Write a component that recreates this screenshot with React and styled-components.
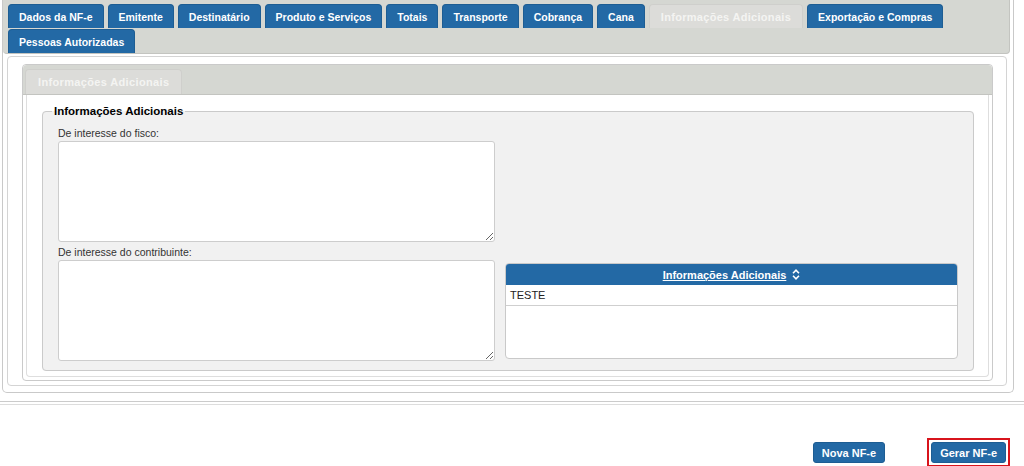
import React from "react";
import styled, { createGlobalStyle } from "styled-components";

const tabs = [
  "Dados da NF-e",
  "Emitente",
  "Destinatário",
  "Produto e Serviços",
  "Totais",
  "Transporte",
  "Cobrança",
  "Cana",
  "Informações Adicionais",
  "Exportação e Compras",
  "Pessoas Autorizadas",
];

function SortIcon() {
  return (
    <svg width="8" height="11" viewBox="0 0 8 11">
      <path
        d="M1 4.2 L4 1.2 L7 4.2 M1 6.8 L4 9.8 L7 6.8"
        fill="none"
        stroke="#fff"
        strokeWidth="1.6"
      />
    </svg>
  );
}

export default function App() {
  return (
    <>
      <GlobalStyle />
      <Widget>
        <Nav>
          {tabs.map((t, i) => (
            <Tab key={t} $active={i === 8}>
              {t}
            </Tab>
          ))}
        </Nav>
        <Panel>
          <InnerWidget>
            <InnerNav>
              <InnerTab>Informações Adicionais</InnerTab>
            </InnerNav>
            <InnerPanel>
              <Fieldset>
                <Legend>Informações Adicionais</Legend>
                <Grid>
                  <Field>
                    <Label>De interesse do fisco:</Label>
                    <TextArea />
                  </Field>
                  <div />
                  <Field>
                    <Label>De interesse do contribuinte:</Label>
                    <TextArea />
                  </Field>
                  <Table>
                    <HeaderCell>
                      <HeaderLink>Informações Adicionais</HeaderLink>
                      <SortIcon />
                    </HeaderCell>
                    <Row>TESTE</Row>
                  </Table>
                </Grid>
              </Fieldset>
            </InnerPanel>
          </InnerWidget>
        </Panel>
      </Widget>
      <Separator />
      <Footer>
        <Button>Nova NF-e</Button>
        <Highlight>
          <Button>Gerar NF-e</Button>
        </Highlight>
      </Footer>
    </>
  );
}

const GlobalStyle = createGlobalStyle`
  body {
    margin: 0;
    background: #ffffff;
    font-family: Arial, "Liberation Sans", sans-serif;
  }
  * { box-sizing: border-box; }
`;

const Widget = styled.div`
  width: 1012px;
  margin-left: 2px;
  padding: 0 3px 6px 0;
  border: 1px solid #c9c9c9;
  border-top: none;
  border-radius: 0 0 5px 5px;
`;

const Nav = styled.div`
  display: flex;
  flex-wrap: wrap;
  column-gap: 4px;
  row-gap: 1px;
  padding: 4px 0 0 5px;
  background: #d5d7d2;
  border: 1px solid #c3c4c0;
  border-top: none;
  border-left: none;
  border-radius: 0 0 4px 4px;
`;

const Tab = styled.div`
  display: flex;
  align-items: center;
  height: 24px;
  padding: 0 ${({ $active }) => ($active ? "11px" : "10px")};
  border-radius: 4px 4px 0 0;
  font-weight: bold;
  font-size: ${({ $active }) => ($active ? "11px" : "10.5px")};
  letter-spacing: ${({ $active }) => ($active ? "0.3px" : "0")};
  color: ${({ $active }) => ($active ? "#f4f4f2" : "#ffffff")};
  background: ${({ $active }) => ($active ? "#dcdcd9" : "#2369a5")};
  border: 1px solid ${({ $active }) => ($active ? "#cfcfcc" : "#1d5d93")};
  border-bottom: none;
  white-space: nowrap;
`;

const Panel = styled.div`
  margin: 2px 3px 0 4px;
  padding: 7px 13px 4px 14px;
  border: 1px solid #d4d4d4;
  border-radius: 4px;
`;

const InnerWidget = styled.div`
  padding-bottom: 3px;
  border: 1px solid #cacaca;
  border-radius: 4px;
`;

const InnerNav = styled.div`
  display: flex;
  padding: 4px 2px 0;
  background: #d5d7d2;
  border-bottom: 1px solid #c3c4c0;
  border-radius: 4px 4px 0 0;
`;

const InnerTab = styled.div`
  display: flex;
  align-items: center;
  height: 25px;
  padding: 0 12px;
  background: #dcdcd9;
  border: 1px solid #cfcfcc;
  border-bottom: none;
  border-radius: 4px 4px 0 0;
  font-weight: bold;
  font-size: 11px;
  letter-spacing: 0.35px;
  color: #f4f4f2;
  white-space: nowrap;
`;

const InnerPanel = styled.div`
  margin: 0 3px;
  padding: 10px 14px 5px 15px;
  border: 1px solid #dedede;
  border-top: none;
  border-radius: 0 0 4px 4px;
`;

const Fieldset = styled.fieldset`
  margin: 0;
  padding: 9px 15px 9px 15px;
  background: #f1f1f1;
  border: 1px solid #cacaca;
  border-radius: 4px;
`;

const Legend = styled.legend`
  margin-left: -6px;
  padding: 0 2px;
  font-weight: bold;
  font-size: 11.5px;
  color: #000000;
`;

const Grid = styled.div`
  display: grid;
  grid-template-columns: 437px 1fr;
  column-gap: 10px;
  row-gap: 3px;
`;

const Field = styled.div`
  display: flex;
  flex-direction: column;
`;

const Label = styled.label`
  height: 14px;
  line-height: 14px;
  margin-bottom: 1px;
  font-size: 10.5px;
  color: #333333;
`;

const TextArea = styled.textarea`
  display: block;
  width: 100%;
  height: 101px;
  margin: 0;
  background: #ffffff;
  border: 1px solid #cdcdcd;
  border-radius: 3px;
  font-family: Arial, "Liberation Sans", sans-serif;
`;

const Table = styled.div`
  align-self: start;
  height: 96px;
  margin-top: 18px;
  background: #ffffff;
  border: 1px solid #c9c9c9;
  border-radius: 4px;
  overflow: hidden;
`;

const HeaderCell = styled.div`
  display: flex;
  align-items: center;
  justify-content: center;
  gap: 6px;
  height: 21px;
  background: #2369a5;
`;

const HeaderLink = styled.span`
  font-weight: bold;
  font-size: 11px;
  color: #ffffff;
  text-decoration: underline;
`;

const Row = styled.div`
  height: 21px;
  line-height: 20px;
  padding-left: 4px;
  border-bottom: 1px solid #cfcfcf;
  font-size: 11px;
  color: #222222;
`;

const Separator = styled.div`
  height: 4px;
  margin-top: 8px;
  border-top: 1px solid #cbcbcb;
  border-bottom: 1px solid #dddddd;
`;

const Footer = styled.div`
  display: flex;
  justify-content: flex-end;
  align-items: center;
  gap: 42px;
  margin-top: 33px;
  padding-right: 14px;
`;

const Highlight = styled.div`
  padding: 2px;
  border: 2px solid #d8141c;
`;

const Button = styled.button`
  all: unset;
  display: flex;
  align-items: center;
  justify-content: center;
  height: 19px;
  padding: 0 8px;
  background: #2369a5;
  border: 1px solid #1d5d93;
  border-radius: 3px;
  font-family: Arial, "Liberation Sans", sans-serif;
  font-weight: bold;
  font-size: 11px;
  color: #ffffff;
`;
